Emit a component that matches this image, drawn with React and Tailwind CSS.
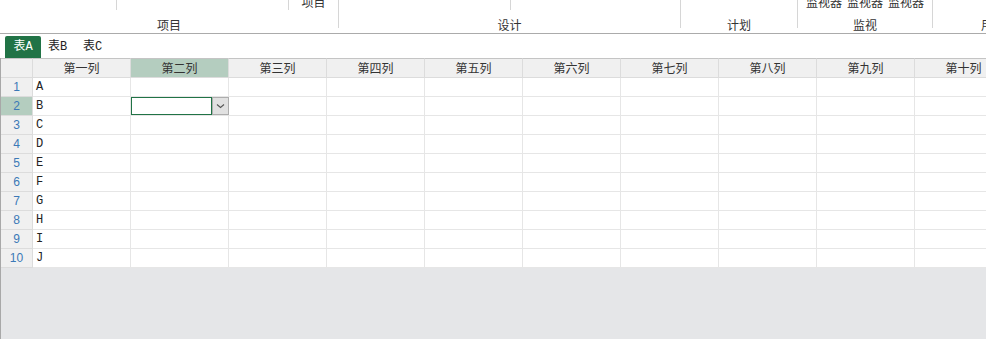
const cjk = "font-['Noto_Sans_CJK_SC',sans-serif]";
const mono = "font-['Liberation_Mono','Noto_Sans_CJK_SC',monospace]";

const columns = ['第一列', '第二列', '第三列', '第四列', '第五列', '第六列', '第七列', '第八列', '第九列', '第十列'];
const rows = ['A', 'B', 'C', 'D', 'E', 'F', 'G', 'H', 'I', 'J'];

const Sep = () => <div className="w-px h-[28px] bg-[#d6d6d6] flex-none" />;
const SubSep = () => <div className="w-px h-[10px] bg-[#d6d6d6] flex-none" />;

const Label = ({ children }) => (
    <div className="mt-[7px] leading-[16px] text-[12px] text-[#333] text-center whitespace-nowrap">{children}</div>
);

const Ribbon = () => (
    <div className={`flex h-[34px] border-b border-[#ababab] overflow-hidden bg-white ${cjk}`}>
        {/* 项目 */}
        <div className="w-[338px] flex-none flex flex-col">
            <div className="h-[10px] flex items-end">
                <div className="w-[116px] flex-none" />
                <SubSep />
                <div className="w-[171px] flex-none" />
                <SubSep />
                <div className="flex-1 text-center text-[12px] leading-[16px] text-[#333]">项目</div>
            </div>
            <Label>项目</Label>
        </div>
        <Sep />
        {/* 设计 */}
        <div className="w-[341px] flex-none flex flex-col">
            <div className="h-[10px] flex items-end">
                <div className="w-[171px] flex-none" />
                <SubSep />
                <div className="flex-1" />
            </div>
            <Label>设计</Label>
        </div>
        <Sep />
        {/* 计划 */}
        <div className="w-[116px] flex-none flex flex-col">
            <div className="h-[10px]" />
            <Label>计划</Label>
        </div>
        <Sep />
        {/* 监视 */}
        <div className="w-[134px] flex-none flex flex-col">
            <div className="h-[10px] flex items-end justify-center gap-[5px] text-[12px] leading-[16px] text-[#333]">
                <span>监视器</span>
                <span>监视器</span>
                <span>监视器</span>
            </div>
            <Label>监视</Label>
        </div>
        <Sep />
        <div className="w-[120px] flex-none flex flex-col">
            <div className="h-[10px]" />
            <Label>用户</Label>
        </div>
    </div>
);

const Tabs = () => (
    <div className={`h-[24px] flex items-end pl-[5px] bg-white ${mono} text-[12px]`}>
        <div className="w-[36px] h-[22px] flex items-center justify-center bg-[#217346] text-white rounded-t-[2px]">表A</div>
        <div className="w-[33px] h-[22px] flex items-center justify-center text-[#222]">表B</div>
        <div className="w-[37px] h-[22px] flex items-center justify-center text-[#222]">表C</div>
    </div>
);

const Editor = () => (
    <div className="flex h-full -mr-px">
        <div className="flex-1 border border-[#217346] bg-white" />
        <div className="w-[17px] flex-none flex items-center justify-center bg-[#e1e1e1] border border-[#adadad]">
            <svg width="9" height="6" viewBox="0 0 9 6" fill="none">
                <path d="M1 1.5 L4.5 4.5 L8 1.5" stroke="#555" strokeWidth="1.1" />
            </svg>
        </div>
    </div>
);

const Grid = () => (
    <div className="border-l border-[#a8a8a8] flex-1 flex flex-col overflow-hidden">
        <div className="grid grid-cols-[32px_repeat(10,98px)] w-max bg-white">
            {/* header */}
            <div className="h-[20px] bg-[#f0f0f0] border-t border-[#c4c4c4] border-r border-b border-r-[#dcdcdc] border-b-[#dcdcdc]" />
            {columns.map((c, i) => (
                <div
                    key={c}
                    className={`h-[20px] flex items-center justify-center border-t border-[#c4c4c4] border-r border-b border-r-[#dcdcdc] border-b-[#dcdcdc] ${cjk} text-[12px] text-[#333] ${
                        i === 1 ? 'bg-[#b4cdbf]' : 'bg-[#f0f0f0]'
                    }`}
                >
                    {c}
                </div>
            ))}
            {rows.map((r, ri) => (
                <div key={r} className="contents">
                    <div
                        className={`h-[19px] flex items-center justify-center border-r border-b border-[#dcdcdc] text-[12px] text-[#3b79b7] font-['Liberation_Sans',sans-serif] ${
                            ri === 1 ? 'bg-[#b4cdbf]' : 'bg-[#f0f0f0]'
                        }`}
                    >
                        {ri + 1}
                    </div>
                    {columns.map((c, ci) => (
                        <div key={c} className="h-[19px] border-r border-b border-[#e6e6e6]">
                            {ci === 0 && (
                                <div className={`pl-[3px] leading-[18px] text-[12px] text-[#222] ${mono}`}>{r}</div>
                            )}
                            {ci === 1 && ri === 1 && <Editor />}
                        </div>
                    ))}
                </div>
            ))}
        </div>
        <div className="flex-1 bg-[#e5e6e8]" />
    </div>
);

export default function App() {
    return (
        <div className="w-[986px] h-[339px] flex flex-col bg-white overflow-hidden">
            <Ribbon />
            <Tabs />
            <Grid />
        </div>
    );
}
